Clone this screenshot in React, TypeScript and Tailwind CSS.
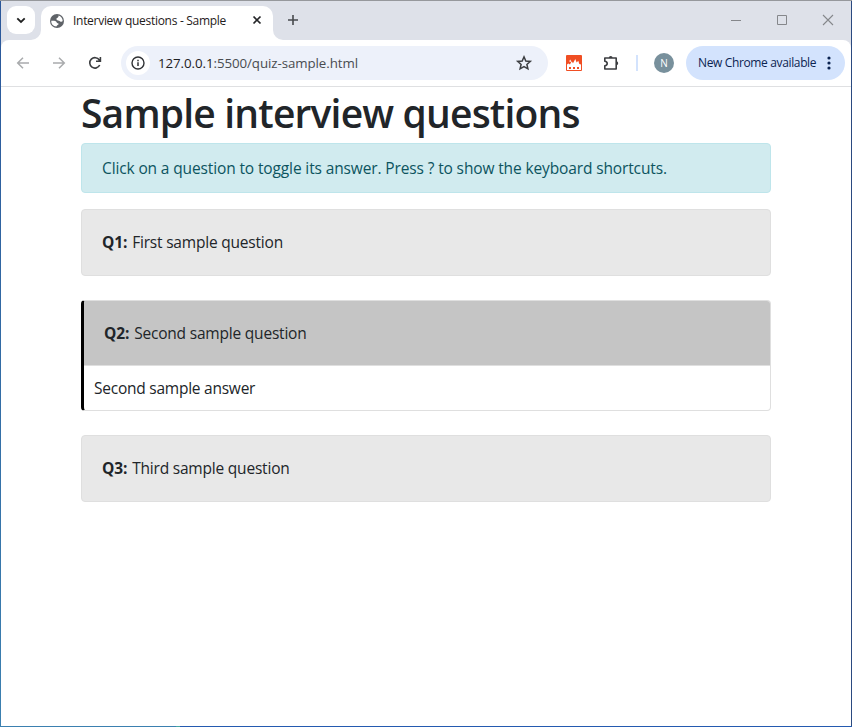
import React from "react";

function Tab() {
  return (
    <div className="relative ml-[6px] flex h-[34px] w-[232px] items-center rounded-t-[10px] bg-white pl-2">
      <svg className="absolute bottom-0 -left-[10px]" width="10" height="10"><path d="M10 0V10H0A10 10 0 0 0 10 0Z" fill="#fff" /></svg>
      <svg className="absolute bottom-0 -right-[10px]" width="10" height="10"><path d="M0 0V10H10A10 10 0 0 1 0 0Z" fill="#fff" /></svg>
      <svg className="-mt-[5px]" width="16" height="16" viewBox="0 0 16 16">
        <circle cx="8" cy="8" r="7" fill="#5f6368" />
        <path d="M2.3 7.8C4 7.6 7.2 7.6 7.6 9.3C7.9 10.7 9.6 9.9 9.7 11C9.7 12 7.6 12 7.4 13.6C4 13.3 2 10.8 2.3 7.8ZM9.6 2.6C12 3.2 13.6 5.3 13.7 8C13.1 9 11.7 9 10.9 8.2C10.2 7.4 7.6 7.6 7.4 6.2C7.3 4.8 9.7 5.2 9.6 2.6Z" fill="#fff" />
      </svg>
      <span className="ml-[8px] -mt-[5px] w-[154px] text-[12px] leading-4 whitespace-nowrap text-[#1f2020] tracking-[-0.29px]">Interview questions - Sample</span>
      <svg className="ml-[24px] -mt-[6px]" width="12" height="12" viewBox="0 0 12 12"><path d="M2.5 2.5L9.5 9.5M9.5 2.5L2.5 9.5" stroke="#252629" strokeWidth="1.7" /></svg>
    </div>
  );
}

function TabStrip() {
  return (
    <div className="flex h-[39px] items-start bg-[#dee1e9] pt-[5px] pl-[6px]">
      <div className="flex size-7 items-center justify-center rounded-[9px] bg-white">
        <svg width="12" height="12" viewBox="0 0 12 12"><path d="M2.3 4.3L6 8L9.7 4.3" fill="none" stroke="#1f2020" strokeWidth="1.8" /></svg>
      </div>
      <Tab />
      <svg className="ml-[13px] mt-[7px]" width="14" height="14"><path d="M7 2V12M2 7H12" stroke="#474a4d" strokeWidth="1.6" /></svg>
      <div className="ml-auto flex items-center gap-[34px] pt-[8px] pr-[17px] text-[#85878b]">
        <svg width="12" height="12"><path d="M1 6.5H11" stroke="currentColor" /></svg>
        <svg width="12" height="12"><path d="M1.5 1.5H10.5V10.5H1.5Z" fill="none" stroke="currentColor" /></svg>
        <svg width="12" height="12"><path d="M1 1L11 11M11 1L1 11" stroke="currentColor" strokeWidth="1.1" /></svg>
      </div>
    </div>
  );
}

function Toolbar() {
  return (
    <div className="bg-[#dee1e9]">
      <div className="flex h-[47px] items-center rounded-t-[8px] border-b border-[#dfe0e2] bg-white pl-[14px]">
        <svg width="16" height="16" viewBox="0 0 16 16"><path d="M14 8H3M8 2.7L2.7 8L8 13.3" fill="none" stroke="#a9abad" strokeWidth="1.5" /></svg>
        <svg className="ml-5" width="16" height="16" viewBox="0 0 16 16"><path d="M2 8H13M8 2.7L13.3 8L8 13.3" fill="none" stroke="#a9abad" strokeWidth="1.5" /></svg>
        <svg className="ml-5" width="16" height="16" viewBox="0 0 16 16"><path d="M12.7 10A5.2 5.2 0 1 1 12.3 5L13 6M13.4 2V6.3H9" fill="none" stroke="#3c3e41" strokeWidth="1.6" /></svg>
        <div className="ml-[18px] flex h-[34px] w-[427px] items-center rounded-full bg-[#edf1fa] pl-[5px] pr-[15px]">
          <div className="flex size-6 items-center justify-center rounded-full bg-white">
            <svg width="16" height="16" viewBox="0 0 16 16"><circle cx="8" cy="8" r="6" fill="none" stroke="#303235" strokeWidth="1.4" /><path d="M8 7.2V11M8 4.8V6.2" stroke="#303235" strokeWidth="1.5" /></svg>
          </div>
          <span className="ml-[8px] text-[13.3px] leading-5 whitespace-nowrap text-[#494c50] tracking-[-0.07px]"><span className="text-[#1f2023]">127.0.0.1</span>:5500/quiz-sample.html</span>
          <svg className="ml-auto" width="18" height="18" viewBox="0 0 18 18"><path d="M9 2.8L10.8 7L15.3 7.4L11.9 10.4L12.9 14.8L9 12.5L5.1 14.8L6.1 10.4L2.7 7.4L7.2 7Z" fill="none" stroke="#3c3e41" strokeWidth="1.5" /></svg>
        </div>
        <svg className="ml-[18px]" width="16" height="16" viewBox="0 0 16 16"><rect width="16" height="16" rx="1" fill="#f04e23" /><path d="M1 11.5V9.5L2.3 8.6L4 9.4L5.6 6.3L7 8.2L9.3 4L10.6 7.6L12.3 5.8L13.3 9L15 9.5V11.5Z" fill="#fff" /><path d="M4.2 4.5Q5.7 6.8 4.2 7Q2.7 6.8 4.2 4.5Z" fill="#fff" /><path d="M1 11H15V15H1Z" fill="#fff" /><path d="M3 12H5V14H3ZM7 12H9V14H7ZM11 12H13V14H11Z" fill="#f04e23" /></svg>
        <svg className="ml-[20px]" width="18" height="18" viewBox="0 0 18 18"><path d="M2.8 4H14.2V15H2.8V11.8C6 11.4 6 7.7 2.8 7.3Z" fill="none" stroke="#3c3e41" strokeWidth="1.6" strokeLinejoin="round" /><path d="M6.8 4A1.9 2 0 0 1 10.6 4ZM14.2 7.3A2 2 0 0 1 14.2 11.3Z" fill="#3c3e41" /></svg>
        <div className="ml-[16px] h-4 w-[2px] bg-[#d3e3fd]" />
        <div className="ml-[16px] flex size-5 items-center justify-center rounded-full bg-[#78909c] text-[10px] leading-none text-white">N</div>
        <div className="ml-[12px] flex h-[34px] w-[159px] items-center rounded-full bg-[#d3e3fd] pl-[12px] text-[#0b2451]">
          <span className="w-[120px] text-[12px] leading-4 whitespace-nowrap tracking-[-0.36px]">New Chrome available</span>
          <svg className="ml-[8px]" width="6" height="16" viewBox="0 0 6 16" fill="currentColor"><circle cx="3" cy="3" r="1.6" /><circle cx="3" cy="8" r="1.6" /><circle cx="3" cy="13" r="1.6" /></svg>
        </div>
      </div>
    </div>
  );
}

function Label({ id, text }: { id: string; text: string }) {
  return (
    <span className="tracking-[-0.2px]">
      <b className="mr-px tracking-[-0.1px]">{id}:</b> {text}
    </span>
  );
}

function Question({ id, text }: { id: string; text: string }) {
  return (
    <div className="mb-6 h-[67px] rounded border border-[#dfdfdf] bg-[#e8e8e8] px-5 py-5">
      <Label id={id} text={text} />
    </div>
  );
}

export default function App() {
  return (
    <div className="flex h-[727px] w-[852px] flex-col overflow-hidden bg-white font-['Open_Sans','Noto_Sans',sans-serif]">
      <div className="h-px bg-[#96989c]" />
      <div className="flex flex-1">
        <div className="w-px bg-linear-to-b from-[#2b579a] to-[#3b80b0]" />
        <div className="flex-1">
          <TabStrip />
          <Toolbar />
          <main className="mx-auto w-[690px] text-[15.5px] leading-6 tracking-[-0.13px] text-[#212529]">
            <h1 className="mb-2 h-12 text-[39px] leading-[52px] font-semibold tracking-[-0.82px] whitespace-nowrap">Sample interview questions</h1>
            <div className="mb-4 h-[50px] rounded border border-[#bee5eb] bg-[#d1ebef] px-5 py-3 whitespace-nowrap text-[#0c5460]">Click on a question to toggle its answer. Press ? to show the keyboard shortcuts.</div>
            <Question id="Q1" text="First sample question" />
            <div className="mb-6 h-[111px] overflow-hidden rounded border border-l-[3px] border-[#dfdfdf] border-l-black">
              <div className="h-[65px] border-b border-[#dfdfdf] bg-[#c5c5c5] px-5 py-5"><Label id="Q2" text="Second sample question" /></div>
              <div className="px-[10px] py-[10px] tracking-[-0.24px]">Second sample answer</div>
            </div>
            <Question id="Q3" text="Third sample question" />
          </main>
        </div>
        <div className="w-px bg-[#2b4a80]" />
      </div>
      <div className="flex h-px"><div className="w-[176px] bg-[#3b80b0]" /><div className="w-1 bg-[#46a5a5]" /><div className="flex-1 bg-[#245ab0]" /></div>
    </div>
  );
}
